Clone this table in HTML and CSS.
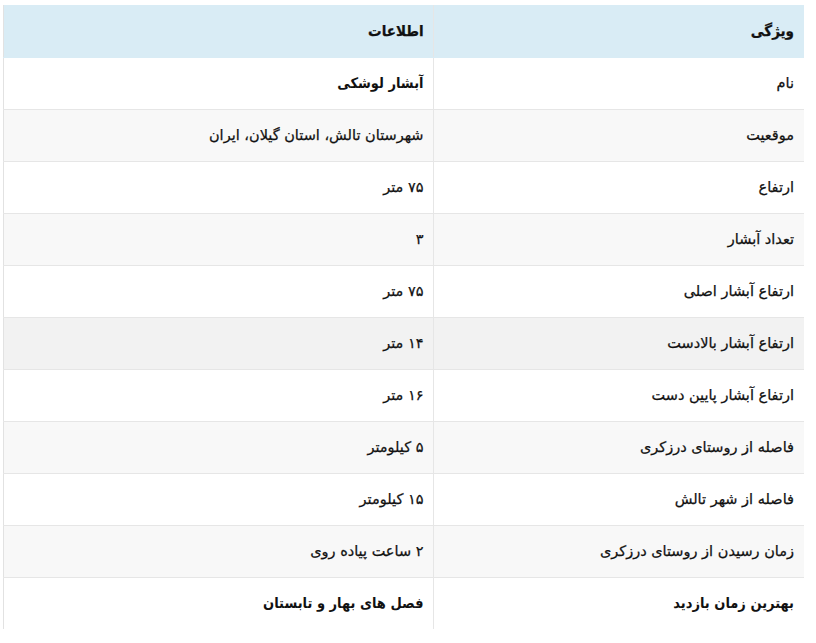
FILE: index.html
```html
<!DOCTYPE html>
<html lang="fa" dir="rtl">
<head>
<meta charset="utf-8">
<link rel="stylesheet" href="styles.css">
</head>
<body>
<div class="wrap">
<table class="info">
<thead>
<tr><th>ویژگی</th><th>اطلاعات</th></tr>
</thead>
<tbody>
<tr><td>نام</td><td class="alt">آبشار لوشکی</td></tr>
<tr class="shade"><td>موقعیت</td><td>شهرستان تالش، استان گیلان، ایران</td></tr>
<tr><td>ارتفاع</td><td>۷۵ متر</td></tr>
<tr class="shade"><td>تعداد آبشار</td><td>۳</td></tr>
<tr><td>ارتفاع آبشار اصلی</td><td>۷۵ متر</td></tr>
<tr class="hover"><td>ارتفاع آبشار بالادست</td><td>۱۴ متر</td></tr>
<tr><td>ارتفاع آبشار پایین دست</td><td>۱۶ متر</td></tr>
<tr class="shade"><td>فاصله از روستای درزکری</td><td>۵ کیلومتر</td></tr>
<tr><td>فاصله از شهر تالش</td><td>۱۵ کیلومتر</td></tr>
<tr class="shade"><td>زمان رسیدن از روستای درزکری</td><td>۲ ساعت پیاده روی</td></tr>
<tr class="last"><td class="alt">بهترین زمان بازدید</td><td class="alt">فصل های بهار و تابستان</td></tr>
</tbody>
</table>
</div>
</body>
</html>
```
FILE: styles.css
```css
html, body {
  margin: 0;
  padding: 0;
  background: #ffffff;
}
.wrap {
  padding: 5px 12px 0 3px;
}
.info {
  width: 801px;
  border-collapse: collapse;
  border-left: 1px solid #e2e2e2;
  font-family: "DejaVu Sans", "Noto Sans", sans-serif;
  font-size: 14.5px;
  color: #111111;
  table-layout: fixed;
  -webkit-text-stroke: 0.25px #111111;
}
.info th, .info td {
  height: 52px;
  padding: 0 9px 0 9px;
  text-align: right;
  vertical-align: middle;
  border-bottom: 1px solid #e6e6e6;
  box-sizing: border-box;
}
.info th:first-child, .info td:first-child {
  width: 371px;
  padding-right: 10px;
}
.info th:last-child, .info td:last-child {
  border-right: 1px solid #e6e6e6;
}
.info thead th {
  background: #d9ecf5;
  font-weight: bold;
  font-family: "DejaVu Sans Condensed", "DejaVu Sans", sans-serif;
  font-size: 15px;
  border-bottom: 1px solid #d9ecf5;
}
.info tr.shade td {
  background: #f8f8f8;
}
.info tr.hover td {
  background: #f2f2f2;
}
.info tr.last td {
  border-bottom: none;
}
.info td.alt {
  font-weight: bold;
  font-family: "DejaVu Sans Condensed", "DejaVu Sans", sans-serif;
  -webkit-text-stroke: 0;
}
```
